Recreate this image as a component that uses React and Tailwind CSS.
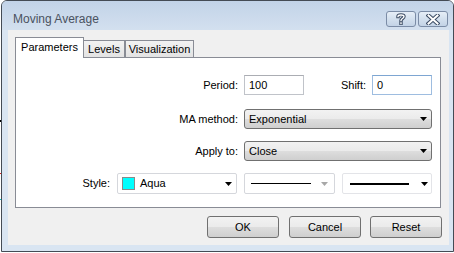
import React from "react";

const btnBg =
  "bg-[linear-gradient(#f2f2f2,#ebebeb_48%,#dddddd_52%,#cfcfcf)]";

function Arrow({ color = "#000" }) {
  return (
    <svg width="7" height="4" viewBox="0 0 7 4">
      <path d="M0 0h7L3.5 4z" fill={color} />
    </svg>
  );
}

function CaptionButton({ children }) {
  return (
    <div className="w-[30px] h-[16px] rounded-[3px] border border-[#7b8ca6] bg-[linear-gradient(#e6eef7,#d3e0ee_50%,#c3d3e6)] flex items-center justify-center">
      {children}
    </div>
  );
}

function Combo({ value, width }) {
  return (
    <div
      className={`${width} h-[20px] rounded-[3px] border border-[#707070] ${btnBg} flex items-center pl-[4px] pr-[4px]`}
    >
      <span className="flex-1">{value}</span>
      <Arrow />
    </div>
  );
}

function DialogButton({ label }) {
  return (
    <div
      className={`w-[72px] h-[22px] rounded-[3px] border border-[#707070] ${btnBg} flex items-center justify-center`}
    >
      {label}
    </div>
  );
}

export default function App() {
  return (
    <div className="relative w-[454px] h-[253px] bg-white overflow-hidden font-['Liberation_Sans',Arial,sans-serif] text-[11px] text-black">
      {/* bits of the chart behind the dialog */}
      <div className="absolute left-0 top-[120px] w-[1px] h-[2px] bg-black" />
      <div className="absolute left-0 top-[173px] w-[1px] h-[1px] bg-[#e02020]" />
      <div className="absolute left-0 top-[199px] w-[1px] h-[1px] bg-[#00c8c8]" />

      <div className="ml-[1px] w-[453px] h-[252px] border border-[#444b55] rounded-t-[6px] bg-[#d9e5f2] flex flex-col">
        {/* title bar */}
        <div className="h-[29px] flex items-start rounded-t-[5px] bg-[linear-gradient(#c2d3e8,#d3e0ef)]">
          <div className="pl-[11px] pt-[9px] text-[12px] text-[#4a5260] flex-1">
            Moving Average
          </div>
          <div className="flex gap-[2px] pt-[10px] pr-[5px]">
            <CaptionButton>
              <svg width="10" height="12" viewBox="0 0 10 12">
                <path
                  d="M2 3.5C2 1.5 8 1.5 8 3.5c0 2-3 2-3 4M5 10v0.5"
                  fill="none"
                  stroke="#3b4b63"
                  strokeWidth="3.4"
                  strokeLinecap="square"
                />
                <path
                  d="M2 3.5C2 1.5 8 1.5 8 3.5c0 2-3 2-3 4M5 10v0.5"
                  fill="none"
                  stroke="#fff"
                  strokeWidth="1.4"
                  strokeLinecap="square"
                />
              </svg>
            </CaptionButton>
            <CaptionButton>
              <svg width="14" height="11" viewBox="0 0 14 11">
                <path
                  d="M2.5 1.5l9 8M11.5 1.5l-9 8"
                  fill="none"
                  stroke="#3b4b63"
                  strokeWidth="4"
                  strokeLinecap="square"
                />
                <path
                  d="M2.5 1.5l9 8M11.5 1.5l-9 8"
                  fill="none"
                  stroke="#fff"
                  strokeWidth="2"
                  strokeLinecap="square"
                />
              </svg>
            </CaptionButton>
          </div>
        </div>

        {/* client area */}
        <div className="flex-1 ml-[6px] mr-[4px] mb-[6px] bg-[#f0f0f0] flex flex-col">
          <div className="pl-[7px] pt-[7px]">
            {/* tabs */}
            <div className="flex items-end h-[20px]">
              <div className="relative z-10 w-[69px] h-[21px] -mb-[1px] border border-b-0 border-[#898c95] bg-white flex items-center justify-center pb-[1px]">
                Parameters
              </div>
              <div className="w-[41px] h-[17px] border-t border-r border-[#898c95] bg-[linear-gradient(#f2f2f2,#e3e3e3)] flex items-center justify-center">
                Levels
              </div>
              <div className="w-[69px] h-[17px] border border-b-0 border-[#898c95] bg-[linear-gradient(#f2f2f2,#e3e3e3)] flex items-center justify-center">
                Visualization
              </div>
            </div>

            {/* tab page */}
            <div className="w-[426px] h-[151px] border border-[#898c95] bg-white flex flex-col">
              <div className="flex items-center h-[20px] mt-[17px]">
                <div className="w-[222px] text-right">Period:</div>
                <div className="ml-[6px] w-[60px] h-[20px] border border-[#c0c3c9] border-t-[#abadb3] flex items-center pl-[4px]">
                  100
                </div>
                <div className="w-[62px] text-right">Shift:</div>
                <div className="ml-[6px] w-[60px] h-[20px] border border-[#9ebde0] border-t-[#7ea6d2] flex items-center pl-[4px]">
                  0
                </div>
              </div>

              <div className="flex items-center mt-[14px]">
                <div className="w-[222px] text-right">MA method:</div>
                <div className="ml-[6px]">
                  <Combo value="Exponential" width="w-[188px]" />
                </div>
              </div>

              <div className="flex items-center mt-[12px]">
                <div className="w-[222px] text-right">Apply to:</div>
                <div className="ml-[6px]">
                  <Combo value="Close" width="w-[188px]" />
                </div>
              </div>

              <div className="flex items-center mt-[12px]">
                <div className="w-[94px] text-right">Style:</div>
                <div className="ml-[7px] w-[120px] h-[21px] border border-[#d5d7dc] rounded-[2px] flex items-center pl-[4px] pr-[4px]">
                  <div className="w-[13px] h-[13px] border border-[#8a8a8a] bg-[#00ffff]" />
                  <span className="ml-[5px] flex-1">Aqua</span>
                  <Arrow />
                </div>
                <div className="ml-[7px] w-[91px] h-[21px] border border-[#d5d7dc] rounded-[2px] flex items-center pl-[6px] pr-[6px]">
                  <div className="w-[60px] h-[1px] bg-black" />
                  <div className="flex-1" />
                  <Arrow color="#a8a8a8" />
                </div>
                <div className="ml-[7px] w-[90px] h-[21px] border border-[#e3e4e8] rounded-[2px] flex items-center pl-[7px] pr-[3px]">
                  <div className="w-[59px] h-[2px] bg-black" />
                  <div className="flex-1" />
                  <Arrow />
                </div>
              </div>
            </div>
          </div>

          {/* dialog buttons */}
          <div className="flex justify-end mt-[8px] mr-[7px]">
            <DialogButton label="OK" />
            <div className="ml-[10px]">
              <DialogButton label="Cancel" />
            </div>
            <div className="ml-[9px]">
              <DialogButton label="Reset" />
            </div>
          </div>
        </div>
      </div>
    </div>
  );
}
